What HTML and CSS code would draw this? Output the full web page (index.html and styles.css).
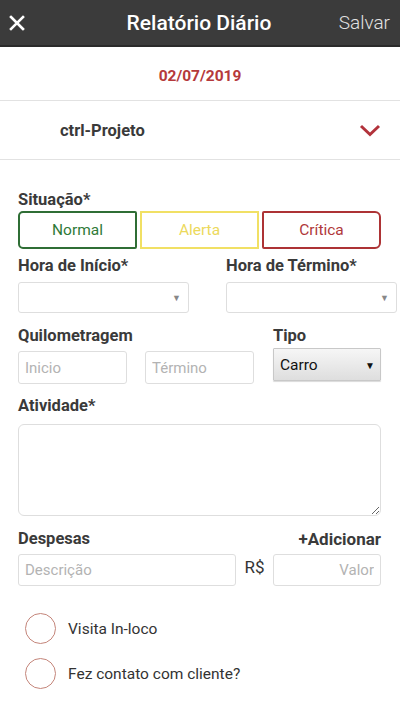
FILE: index.html
```html
<!DOCTYPE html>
<html lang="pt-BR">
<head>
  <meta charset="UTF-8">
  <title>Relatório Diário</title>
  <meta name="viewport" content="width=device-width, initial-scale=1">
  <link rel="stylesheet" href="styles.css">
</head>
<body>
  <header class="topbar">
    <button class="close" aria-label="Fechar">
      <svg width="16" height="16" viewBox="0 0 16 16"><path d="M2 2L14 14M14 2L2 14" stroke="#fff" stroke-width="2.6" stroke-linecap="square"/></svg>
    </button>
    <h1>Relatório Diário</h1>
    <button class="save">Salvar</button>
  </header>

  <div class="date-row">02/07/2019</div>

  <div class="project-row">
    <span>ctrl-Projeto</span>
    <svg width="22" height="13" viewBox="0 0 22 13"><path d="M2 2L11 10.5L20 2" fill="none" stroke="#b2323b" stroke-width="3"/></svg>
  </div>

  <form class="form">
    <label class="lbl lbl-situacao">Situação*</label>
    <div class="status">
      <button type="button" class="st st-normal">Normal</button>
      <button type="button" class="st st-alerta">Alerta</button>
      <button type="button" class="st st-critica">Crítica</button>
    </div>

    <div class="hours">
      <div>
        <label class="lbl">Hora de Início*</label>
        <div class="sel sel-hour"><select></select><span class="arrow">▼</span></div>
      </div>
      <div>
        <label class="lbl">Hora de Término*</label>
        <div class="sel sel-hour"><select></select><span class="arrow">▼</span></div>
      </div>
    </div>

    <div class="km">
      <div class="km-fields">
        <label class="lbl">Quilometragem</label>
        <div class="km-inputs">
          <input type="text" placeholder="Inicio">
          <input type="text" placeholder="Término">
        </div>
      </div>
      <div class="tipo">
        <label class="lbl">Tipo</label>
        <div class="sel sel-tipo"><select><option>Carro</option></select><span class="arrow">▼</span></div>
      </div>
    </div>

    <label class="lbl lbl-atividade">Atividade*</label>
    <textarea></textarea>

    <div class="desp-head">
      <label class="lbl">Despesas</label>
      <span class="add">+Adicionar</span>
    </div>
    <div class="desp-row">
      <input type="text" class="desc" placeholder="Descrição">
      <span class="rs">R$</span>
      <input type="text" class="valor" placeholder="Valor">
    </div>

    <div class="check"><span class="circle"></span>Visita In-loco</div>
    <div class="check check-2"><span class="circle"></span>Fez contato com cliente?</div>
  </form>
</body>
</html>
```

FILE: styles.css
```css
body {
  margin: 0;
  font-family: Roboto, "Liberation Sans", sans-serif;
  background: #fff;
  color: #333;
  overflow: hidden;
}
.topbar {
  height: 45px;
  background: #3b3b3b;
  border-bottom: 2px solid #2a2a2a;
  display: grid;
  grid-template-columns: 1fr auto 1fr;
  align-items: center;
  padding: 0 10px 0 8px;
}
.topbar h1 {
  margin: 0;
  color: #fff;
  font-size: 21px;
  font-weight: 500;
}
.close, .save {
  background: none;
  border: none;
  padding: 0;
  font-family: inherit;
}
.close {
  width: 18px;
  height: 18px;
  display: flex;
  align-items: center;
  justify-content: center;
  margin-top: 1px;
}
.save {
  justify-self: end;
  color: #e2e2e2;
  font-size: 19px;
  font-weight: 300;
}
.date-row {
  height: 48px;
  padding-top: 5px;
  display: flex;
  align-items: center;
  justify-content: center;
  color: #b5393b;
  font-weight: 700;
  font-size: 15.5px;
  border-bottom: 1px solid #e2e2e2;
}
.project-row {
  height: 58px;
  display: flex;
  align-items: center;
  justify-content: space-between;
  padding: 0 19px 0 60px;
  font-weight: 700;
  font-size: 16.5px;
  color: #3a3a3a;
  border-bottom: 1px solid #e2e2e2;
}
.form {
  padding: 31px 19px 0 18px;
}
.lbl {
  display: block;
  font-size: 16.5px;
  font-weight: 700;
  line-height: 18px;
  color: #3a3a3a;
}
.status {
  display: flex;
  gap: 3px;
  margin-top: 2px;
}
.st {
  width: 119px;
  height: 38px;
  background: #fff;
  border: 2px solid;
  font-family: inherit;
  font-size: 15.5px;
  padding: 0;
}
.st-normal { border-color: #2f6e35; color: #2f7a38; border-radius: 5px 2px 2px 5px; }
.st-alerta { border-color: #f1e064; color: #ecd95c; border-radius: 0; }
.st-critica { border-color: #ad3335; color: #b0383a; border-radius: 2px 6px 6px 2px; }
.hours {
  display: grid;
  grid-template-columns: 171px 171px;
  column-gap: 37px;
  margin-top: 8px;
  margin-right: -19px;
}
.sel { position: relative; }
.sel select {
  -webkit-appearance: none;
  appearance: none;
  display: block;
  width: 100%;
  font-family: inherit;
  font-size: 15.5px;
  color: #222;
}
.sel .arrow {
  position: absolute;
  top: 50%;
  right: 8px;
  transform: translateY(-50%);
  font-size: 9px;
  color: #888;
  pointer-events: none;
}
.sel-hour { margin-top: 7px; }
.sel-hour select {
  height: 31px;
  background: #fff;
  border: 1px solid #dedede;
  border-radius: 3px;
}
.km {
  display: flex;
  gap: 19px;
  margin-top: 14px;
}
.km-inputs {
  display: flex;
  gap: 18px;
  margin-top: 6px;
}
input, textarea {
  font-family: inherit;
  font-size: 15px;
  border: 1px solid #dedede;
  border-radius: 3px;
  box-sizing: border-box;
  padding: 0 6px;
  color: #333;
}
input::placeholder { color: #b3b3b3; }
.km-inputs input { width: 109px; height: 33px; }
.tipo { width: 108px; }
.sel-tipo { margin-top: 3px; }
.sel-tipo select {
  height: 33px;
  padding: 0 6px;
  background: linear-gradient(#f6f6f6, #dedede);
  border: 1px solid #c8c8c8;
  border-radius: 1px;
  box-shadow: 0 1px 1px rgba(0,0,0,0.15);
  color: #111;
}
.sel-tipo .arrow { color: #111; font-size: 10px; right: 6px; }
.lbl-atividade { margin-top: 13px; }
textarea {
  display: block;
  width: 100%;
  height: 92px;
  margin-top: 9px;
  border-radius: 6px;
  resize: vertical;
}
.desp-head {
  display: flex;
  justify-content: space-between;
  align-items: center;
  margin-top: 14px;
}
.add {
  font-size: 17px;
  font-weight: 700;
  color: #3a3a3a;
  line-height: 18px;
}
.desp-row {
  display: flex;
  align-items: center;
  margin-top: 6px;
}
.desp-row input { height: 32px; }
.desc { width: 218px; }
.rs {
  width: 37px;
  text-align: center;
  font-size: 17px;
  color: #333;
  margin-top: -6px;
}
.valor { width: 108px; text-align: right; }
.check {
  display: flex;
  align-items: center;
  gap: 12px;
  margin: 27px 0 0 7px;
  font-size: 15.5px;
  color: #333;
}
.check-2 { margin-top: 14px; }
.circle {
  width: 29px;
  height: 29px;
  border: 1.5px solid #c4857a;
  border-radius: 50%;
}
```
